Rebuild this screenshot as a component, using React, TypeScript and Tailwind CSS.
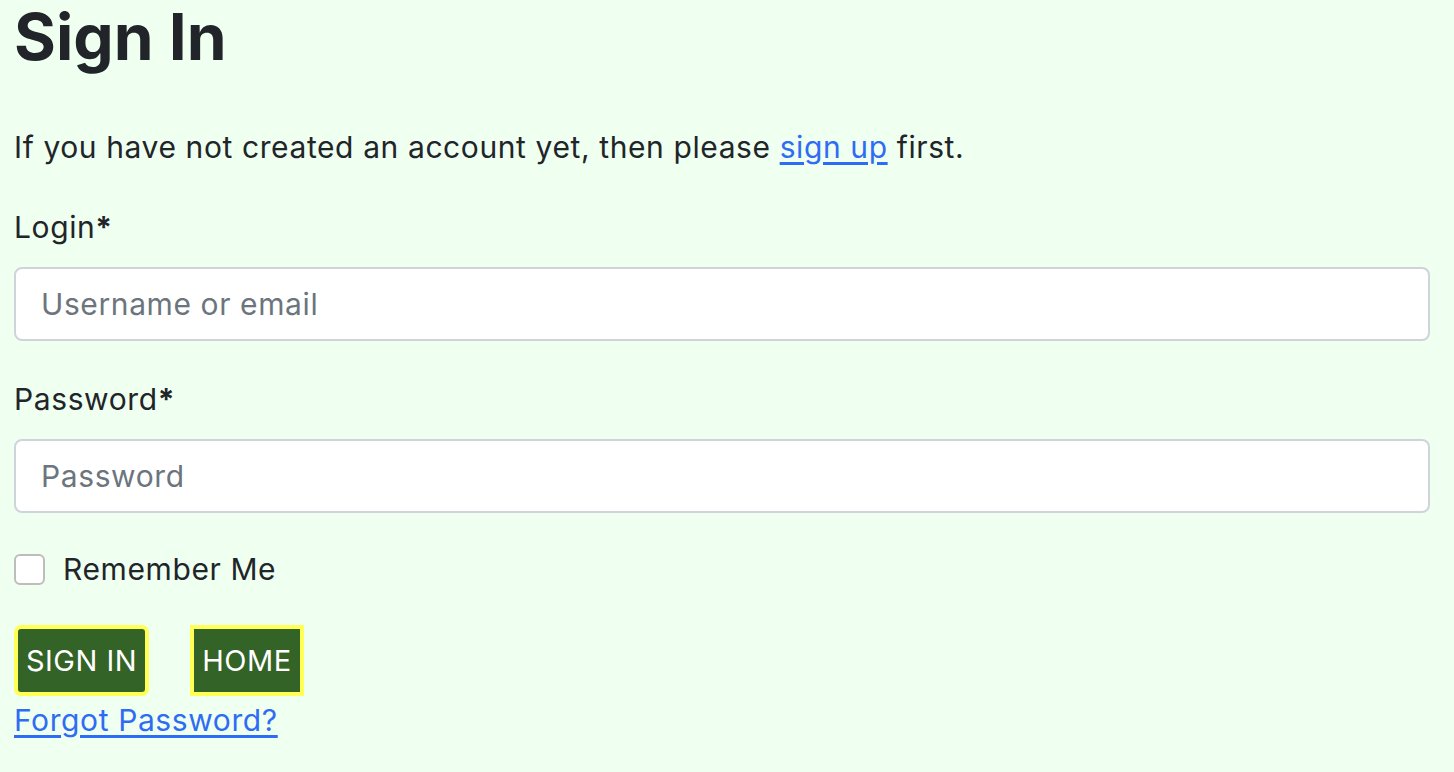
import { useState } from 'react';

export default function App() {
  const [remember, setRemember] = useState(false);

  return (
    <div className="min-h-screen w-full bg-[#effff0] text-[#212529] font-['Inter',sans-serif] tracking-[0.6px]">
      <div className="pl-[14px] pr-[24px] pt-[1px]">
        <h1 className="text-[64px] font-bold leading-[72px] tracking-[0px]">Sign In</h1>

        <p className="mt-[56px] text-[30px] leading-[36px]">
          If you have not created an account yet, then please{' '}
          <a href="#" className="text-[#2f6cf5] underline underline-offset-[4px]">sign up</a> first.
        </p>

        <form className="mt-[44px] flex flex-col">
          <label className="text-[30px] leading-[36px]">
            Login<span className="font-bold">*</span>
          </label>
          <input
            type="text"
            placeholder="Username or email"
            className="mt-[22px] h-[74px] w-full rounded-[8px] border-2 border-[#ced4da] bg-white px-[25px] text-[30px] text-[#212529] placeholder:text-[#6c757d] outline-none"
          />

          <label className="mt-[40px] text-[30px] leading-[36px]">
            Password<span className="font-bold">*</span>
          </label>
          <input
            type="password"
            placeholder="Password"
            className="mt-[22px] h-[74px] w-full rounded-[8px] border-2 border-[#ced4da] bg-white px-[25px] text-[30px] text-[#212529] placeholder:text-[#6c757d] outline-none"
          />

          <label className="mt-[38px] flex items-center gap-[18px] text-[30px] leading-[36px]">
            <span
              onClick={() => setRemember(!remember)}
              className={remember ? "h-[31px] w-[31px] rounded-[6px] border-2 border-[#336327] bg-[#336327]" : "h-[31px] w-[31px] rounded-[6px] border-2 border-[#bdbdbd] bg-white"}
            />
            Remember Me
          </label>

          <div className="mt-[38px] flex items-center gap-[41px]">
            <button
              type="button"
              className="h-[71px] w-[135px] rounded-[7px] border-[4px] border-[#ffff55] bg-[#336327] text-[29px] text-white tracking-[0.5px]"
            >
              SIGN IN
            </button>
            <button
              type="button"
              className="h-[71px] w-[114px] border-[4px] border-[#ffff55] bg-[#336327] text-[29px] text-white tracking-[0.5px]"
            >
              HOME
            </button>
          </div>

          <div className="mt-[4px]">
            <a href="#" className="text-[30px] leading-[40px] text-[#2f6cf5] underline underline-offset-[4px]">
              Forgot Password?
            </a>
          </div>
        </form>
      </div>
    </div>
  );
}
